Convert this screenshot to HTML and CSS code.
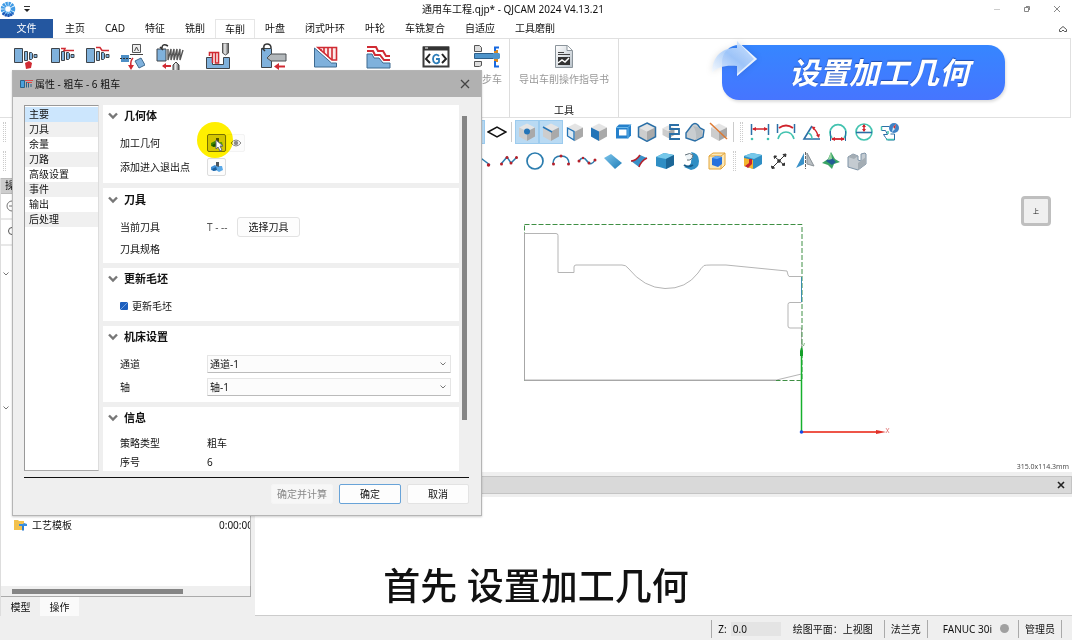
FILE: index.html
```html
<!DOCTYPE html>
<html lang="zh-CN">
<head>
<meta charset="utf-8">
<meta name="viewport" content="width=device-width, initial-scale=1">
<title>通用车工程.qjp* - QJCAM 2024 V4.13.21</title>
<link rel="stylesheet" href="styles.css">
</head>
<body>
<svg class="defs" width="0" height="0" aria-hidden="true">
  <defs>
    <linearGradient id="bar" x1="0" y1="0" x2="1" y2="0"><stop offset="0" stop-color="#777"/><stop offset=".4" stop-color="#eee"/><stop offset="1" stop-color="#555"/></linearGradient>
    <linearGradient id="sheen" x1="0" y1="0" x2="1" y2="1"><stop offset="0" stop-color="#7cc4ea"/><stop offset="1" stop-color="#1f7db8"/></linearGradient>
    <linearGradient id="page" x1="0" y1="0" x2="1" y2="1"><stop offset="0" stop-color="#fff"/><stop offset="1" stop-color="#b9c2ca"/></linearGradient>
    <linearGradient id="arrow" x1="0" y1="1" x2="1" y2="0"><stop offset="0" stop-color="#fff"/><stop offset=".5" stop-color="#a9cdfb"/><stop offset="1" stop-color="#e4f0ff"/></linearGradient>
    <symbol id="cube" viewBox="0 0 20 20">
      <path d="M10 1.500 18 5.500 10 9.500 2 5.500z" fill="#e4e4e4"/>
      <path d="M2 5.500 10 9.500V19L2 14.500z" fill="#cdcdcd"/>
      <path d="M18 5.500 10 9.500V19l8-4.500z" fill="#a9a9a9"/>
    </symbol>
    <symbol id="chevron" viewBox="0 0 10 8"><path d="M1 1.500 5 5.500 9 1.500" fill="none" stroke="#777" stroke-width="2.400"/></symbol>
    <symbol id="thin-chevron" viewBox="0 0 8 6"><path d="M1.500 1.500 4 4l2.500-2.500" fill="none" stroke="#777" stroke-width="1"/></symbol>
    <symbol id="geometry" viewBox="0 0 14 12"><path d="M1 6l4-2 4 3-4 3-4-1z" fill="#3f8fd6"/><path d="M7 5l5 0 1 4-4 2-3-2z" fill="#5aa9e8"/><path d="M6 5V1h3v5z" fill="#4d565e"/><path d="M2 8l4-2 1 3-4 1z" fill="#1b5d9c"/></symbol>
    <symbol id="stepped" viewBox="0 0 26 26">
      <path d="M1.500 3.500h8v14h-8z" fill="#7fb1dc" stroke="#3e444a"/>
      <path d="M11.500 6.500h3v9h-3z M16.500 7.500h2l1 1v5l-1 1h-2z M21 9.500h3v3h-3z" fill="#7fb1dc" stroke="#3e444a"/>
    </symbol>
  </defs>
</svg>

<div class="app">
  <header class="titlebar">
    <div class="quick">
      <svg width="16" height="16" viewBox="0 0 16 16" fill="none"><circle cx="8" cy="8" r="5" stroke="#3f9be6" stroke-width="4.500" stroke-dasharray="2 .6"/><path d="M3 12A6.300 6.300 0 0 0 13 12" stroke="#1d55b5" stroke-width="3" stroke-dasharray="2 .6"/><circle cx="8" cy="8" r="2" fill="#fff"/></svg>
      <svg width="8" height="8" viewBox="0 0 8 8"><path d="M1 1.500h6" stroke="#333"/><path d="M1 4h6L4 7z" fill="#222"/></svg>
    </div>
    <h1 class="title">通用车工程.qjp* - QJCAM 2024 V4.13.21</h1>
    <div class="controls">
      <button type="button" class="plain"><svg width="8" height="8"><path d="M1 4.500h6" stroke="#ccc"/></svg></button>
      <button type="button" class="plain"><svg width="8" height="8" fill="none" stroke="#888"><path d="M1.500 2.500h4v4h-4z M3 1.500h3.500V5"/></svg></button>
      <button type="button" class="plain"><svg width="8" height="8" fill="none" stroke="#888"><path d="M1 1l6 6M7 1 1 7"/></svg></button>
    </div>
  </header>

  <nav class="tabs">
    <button type="button" class="tab file">文件</button>
    <button type="button" class="tab">主页</button>
    <button type="button" class="tab">CAD</button>
    <button type="button" class="tab">特征</button>
    <button type="button" class="tab">铣削</button>
    <button type="button" class="tab active">车削</button>
    <button type="button" class="tab">叶盘</button>
    <button type="button" class="tab">闭式叶环</button>
    <button type="button" class="tab">叶轮</button>
    <button type="button" class="tab">车铣复合</button>
    <button type="button" class="tab">自适应</button>
    <button type="button" class="tab">工具磨削</button>
    <button type="button" class="plain collapse"><svg width="10" height="8" fill="none" stroke="#555"><path d="M1.500 6.500V4.500L5 1.500l3.500 3v2h-2L5 5 3.500 6.500z"/></svg></button>
  </nav>

  <section class="ribbon">
    <div class="group turning">
      <button type="button" class="tool low"><svg width="26" height="26"><use href="#stepped" width="26" height="26"/><path d="M12 18l4-2 3 2-1 5-5 1z" fill="#d02b33"/></svg></button>
      <button type="button" class="tool low"><svg width="26" height="26"><use href="#stepped" width="26" height="26"/><path d="M11 3.500h4l-1 2h10" fill="none" stroke="#d02b33" stroke-width="1.500"/></svg></button>
      <button type="button" class="tool low"><svg width="26" height="26"><use href="#stepped" width="26" height="26"/><path d="M11 2.500h4l2 3h7" fill="none" stroke="#d02b33" stroke-width="1.500"/></svg></button>
      <button type="button" class="tool"><svg width="26" height="28"><path d="M13.500 1.500h8v8h-8z" fill="#eee" stroke="#555"/><path d="M15.500 8l2-4 2 4M11 11.500h13" fill="none" stroke="#444"/><path d="M2 12h8v7H2z" fill="#4d8fc6"/><path d="M1 15.500h11" stroke="#333" stroke-dasharray="2 1"/><path d="M16 18l6-3 4 7-6 3z" fill="#7fb1dc" stroke="#3e6a90"/><path d="M14 15q-3 3-2 8" fill="none" stroke="#d02b33" stroke-width="1.500"/><path d="M9 22h6l-3 5z" fill="#d02b33"/></svg></button>
      <button type="button" class="tool"><svg width="30" height="28"><path d="M2 6h9v12H2z" fill="#7fb1dc" stroke="#3e444a"/><path d="M7 5q0-4 4-3l2 1M5 4l3 3" fill="none" stroke="#333" stroke-width="1.500"/><path d="M13 6v11l3-11v11l3-11v11l3-11v11l3-11v11l3-10" fill="none" stroke="#555" stroke-width="1.400"/><path d="M8 23h8" stroke="#d02b33" stroke-width="2"/><path d="M11 20v6l-4-3z" fill="#d02b33"/><path d="M18 28v-6l3-3 3 3v6" fill="url(#bar)" stroke="#444"/></svg></button>
      <button type="button" class="tool"><svg width="26" height="27"><path d="M1.500 14.500h6v7h11v-7h6v11h-23z" fill="#7fb1dc" stroke="#3e444a"/><path d="M4.500 13V9.500h9V20h-3V9.500M7.500 10v10" fill="none" stroke="#d02b33" stroke-width="1.600"/><path d="M17.500 0h6v10l-3 2-3-2z" fill="url(#bar)" stroke="#555"/></svg></button>
      <button type="button" class="tool"><svg width="28" height="27"><path d="M2.500 5.500h10v6l-3 3 3 3v7h-10z" fill="#7fb1dc" stroke="#3e444a"/><path d="M5 6q-1-5 3-5 4 0 4 4M3 5l3 3" fill="none" stroke="#333" stroke-width="1.500"/><path d="M8 15l4-4h15v7H12z" fill="#b3b8bb" stroke="#4b4f52"/><path d="M18 23.500h8" stroke="#d02b33" stroke-width="2"/><path d="M20 20v7l-5-3.500z" fill="#d02b33"/></svg></button>
      <button type="button" class="tool low"><svg width="26" height="26"><path d="M1.500 3v19h22v-4h-5z" fill="#7fb1dc" stroke="#3e6a90"/><path d="M5 2.500h18.500V15H19z" fill="#fbeaea" stroke="#d02b33" stroke-width="1.600"/><path d="M11 3v5M15 3v9M19 3v12M7 5h2" stroke="#d02b33" stroke-width="1.600"/></svg></button>
      <button type="button" class="tool low"><svg width="26" height="26"><path d="M1 9h5l2 4h5l4 5h7v5H1z" fill="#7fb1dc" stroke="#3e6a90"/><path d="M1 6h6l2 4h5l4 5h6M1 2h9l2 4h5l3 5h4" fill="none" stroke="#d02b33" stroke-width="2"/></svg></button>
      <button type="button" class="tool low"><svg width="28" height="26"><path d="M1.500 2.500h25v19h-25z" fill="#fff" stroke="#3c3c3c" stroke-width="2"/><path d="M1 1.500h26v4H1z" fill="#333"/><path d="M3 3h3" stroke="#fff"/><path d="M8 9l-4 5 4 4M20 9l4 5-4 4" fill="none" stroke="#222" stroke-width="2"/><path d="M17 11q-2-2-4-1t-2 4 2 4 4-1v-3h-3" fill="none" stroke="#2b7cb8" stroke-width="1.800"/></svg></button>
      <button type="button" class="tool"><svg width="28" height="26"><path d="M1.500 10.500h19v5h-19z" fill="#4f95cb" stroke="#2d5f8a"/><path d="M20 10h6l1 1v4l-1 1h-6z" fill="#4f95cb"/><path d="M1.500 2.500h5l2 2v4h-7zM1.500 18.500h7v4l-2 1h-5z" fill="#ddd" stroke="#555"/><path d="M21 8.500h4M21 17.500h4" stroke="#d88a24" stroke-width="3"/><path d="M26 4.500h-4V8M26 23.500h-4V18" fill="none" stroke="#1769e0" stroke-width="2"/></svg><span>同步车</span></button>
    </div>
    <div class="group tools">
      <button type="button" class="tool"><svg width="22" height="26"><path d="M2.500 2.500h12l5 5v17h-17z" fill="url(#page)" stroke="#8b949b"/><path d="M14 2.500v5h5" fill="#fff" stroke="#8b949b"/><path d="M5 9.500h6M5 11.500h12" stroke="#444"/><path d="M5 14h12v8H5z" fill="#333"/><path d="M5 20l4-3 3 2 4-4" fill="none" stroke="#fff" stroke-width="1.500"/></svg><span>导出车削操作指导书</span></button>
      <span class="group-name">工具</span>
    </div>
  </section>

  <div class="toolbars">
    <div class="bar">
      <i class="grip edge"></i>
      <button type="button" class="ico on"></button>
      <button type="button" class="ico"><svg width="20" height="20"><path d="M1 10l9-5 9 5-9 5z" fill="none" stroke="#111" stroke-width="1.500"/></svg></button>
      <i class="sep"></i>
      <button type="button" class="ico on"><svg width="20" height="20"><use href="#cube"/><circle cx="10" cy="9.500" r="3" fill="#2475b8"/></svg></button>
      <button type="button" class="ico on"><svg width="20" height="20"><use href="#cube"/><path d="M2 5l9 5" stroke="#2475b8" stroke-width="1.500"/></svg></button>
      <button type="button" class="ico"><svg width="20" height="20"><use href="#cube"/><path d="M2.500 6 9 9.500V18l-6.500-4z" fill="#dceaf4" stroke="#2475b8" stroke-width="1.300"/></svg></button>
      <button type="button" class="ico"><svg width="20" height="20"><use href="#cube"/><path d="M2 5.500 10 9.500V19l-8-4.500z" fill="#2475b8"/></svg></button>
      <button type="button" class="ico"><svg width="20" height="20"><path d="M3 5.500 6 2.500h12v11l-3 3H3z" fill="#2580cb"/><path d="M6 7.500h7.500v6H6z" fill="#fff"/><path d="M3 5.500h12v11M15 5.500l3-3" fill="none" stroke="#69b7ea"/></svg></button>
      <button type="button" class="ico"><svg width="20" height="20"><use href="#cube"/><path d="M10 1l8.500 4.300v9.400L10 19.300l-8.500-4.600V5.300z" fill="none" stroke="#2b6fa6" stroke-width="1.500"/></svg></button>
      <button type="button" class="ico"><svg width="20" height="20"><use href="#cube" x="0" y="1" width="15" height="17"/><path d="M18 3H9v4h9v5H9v5h10" fill="none" stroke="#2b6fa6" stroke-width="1.800"/></svg></button>
      <button type="button" class="ico"><svg width="22" height="20"><path d="M2 11 8 3q3-3 6 0l2 3 4 2-1 7-8 4-9-3z" fill="#c9cdd0" stroke="#2b6fa6" stroke-width="1.400"/><path d="M9 4q4 5 3 14l6-4V9l-4-4z" fill="#b6bcc0"/></svg></button>
      <button type="button" class="ico"><svg width="20" height="20"><use href="#cube"/><path d="M1 1l17 16" stroke="#dd7a34" stroke-width="1.500"/></svg></button>
      <i class="sep"></i><i class="grip"></i>
      <button type="button" class="ico wide"><svg width="20" height="20"><path d="M1.500 2v11M18.500 2v11" stroke="#2b6fa6" stroke-width="1.500"/><path d="M3 7h14" stroke="#d0232c" stroke-width="1.500"/><path d="M2 7l4-2v4zM18 7l-4-2v4z" fill="#d0232c"/><circle cx="2" cy="17" r="1.300" fill="#43c3b0"/><circle cx="18" cy="17" r="1.300" fill="#43c3b0"/></svg></button>
      <button type="button" class="ico wide"><svg width="20" height="20" fill="none"><path d="M1.500 2v9M18.500 2v9" stroke="#2b6fa6" stroke-width="1.500"/><path d="M3 6q7-5 14 0" stroke="#d0232c" stroke-width="1.800"/><path d="M2 17q2-7 8-7t8 7" stroke="#43c3b0" stroke-width="1.600"/></svg></button>
      <button type="button" class="ico wide"><svg width="20" height="20" fill="none"><path d="M10 4 2 17h16" stroke="#2b6fa6" stroke-width="1.600"/><path d="M6 11q4 1 4 6" stroke="#43c3b0" stroke-width="1.500"/><path d="M11 6q4 3 5 8" stroke="#d0232c" stroke-width="1.500"/><path d="M9.500 4.500l4 .5-2 3zM17 16l-3-3 4-1z" fill="#d0232c"/></svg></button>
      <button type="button" class="ico wide"><svg width="20" height="20" fill="none"><path d="M4 16a8 8 0 1 1 12 0" stroke="#43c3b0" stroke-width="1.800"/><path d="M2.500 9v10M17.500 9v10" stroke="#2b6fa6"/><path d="M4 17h12" stroke="#d0232c" stroke-width="1.800"/><path d="M3 17l4-2v4zM17 17l-4-2v4z" fill="#d0232c"/></svg></button>
      <button type="button" class="ico wide"><svg width="20" height="20" fill="none"><circle cx="10" cy="10" r="8" stroke="#43c3b0" stroke-width="1.600"/><path d="M2 10.500h16" stroke="#2b6fa6" stroke-width="1.600"/><path d="M10 3v6" stroke="#d0232c" stroke-width="1.500"/><path d="M10 2l2 3H8zM10 10l2-3H8z" fill="#d0232c"/></svg></button>
      <button type="button" class="ico wide"><svg width="20" height="20" fill="none"><path d="M1.500 4.500h8M1.500 8.500h4l2 4h-4l2 3 2 2.500h7v-6h-4" stroke="#2b6fa6"/><path d="M1.500 4.500v4M6 17.500h8M8 12v-3" stroke="#43c3b0" stroke-width="1.500"/><circle cx="14" cy="6" r="5" fill="#3f83c6"/><path d="M16 2l-1 5-3 3 1-5z" fill="#d8ecfa"/><path d="M16 2l-1 5-2-2z" fill="#c83237"/></svg></button>
    </div>
    <div class="bar second">
      <i class="grip edge"></i>
      <button type="button" class="ico wide"><svg width="20" height="20"><path d="M5 5l12 9" stroke="#2b7cae" stroke-width="1.500"/><circle cx="15.500" cy="14" r="1.700" fill="#b5202b"/></svg></button>
      <button type="button" class="ico wide"><svg width="20" height="20"><path d="M2 13l6-7 4 6 6-6" fill="none" stroke="#2b7cae" stroke-width="1.500"/><g fill="#b5202b"><circle cx="2.500" cy="13" r="1.500"/><circle cx="8" cy="6.500" r="1.500"/><circle cx="12" cy="12" r="1.500"/><circle cx="17.500" cy="6.500" r="1.500"/></g></svg></button>
      <button type="button" class="ico wide"><svg width="20" height="20"><circle cx="10" cy="10" r="8" fill="none" stroke="#2b7cae" stroke-width="1.700"/></svg></button>
      <button type="button" class="ico wide"><svg width="20" height="20"><path d="M2 13q0-8 8-8t8 8" fill="none" stroke="#2b7cae" stroke-width="1.500"/><g fill="#b5202b"><circle cx="2.500" cy="13" r="1.500"/><circle cx="10" cy="5" r="1.500"/><circle cx="17.500" cy="13" r="1.500"/></g></svg></button>
      <button type="button" class="ico wide"><svg width="20" height="20"><path d="M2 10q4-6 8 0t8-1" fill="none" stroke="#2b7cae" stroke-width="1.500"/><g fill="#b5202b"><circle cx="2" cy="10" r="1.500"/><circle cx="6" cy="7" r="1.200"/><circle cx="12" cy="12" r="1.500"/><circle cx="18" cy="9" r="1.500"/></g></svg></button>
      <button type="button" class="ico wide"><svg width="20" height="20"><path d="M1 7l7-4 11 9-7 6z" fill="url(#sheen)"/></svg></button>
      <button type="button" class="ico wide"><svg width="20" height="20"><path d="M2 10q5 0 9-6l7 3q-6 3-8 9z" fill="#3a91c8"/><path d="M2 10q5 0 9-6M10 16q2-6 8-9" fill="none" stroke="#b5202b" stroke-width="1.500"/></svg></button>
      <button type="button" class="ico wide"><svg width="20" height="20"><path d="M1 6l8-4 10 2v10l-8 4-10-3z" fill="#2f8ec4"/><path d="M1 6l8-4 10 2-8 4z" fill="#76c8ea"/><path d="M11 8l8-4v10l-8 4z" fill="#1d6797"/></svg></button>
      <button type="button" class="ico wide"><svg width="20" height="20"><path d="M10 1q8 1 8 9t-8 9L3 16q5 0 7-4 0-5 2-6z" fill="#2f8ec4"/><path d="M4 4q5-3 8 0-1 6-6 5" fill="#eef4f7" stroke="#65737b"/><path d="M3 14q4 3 9 0" fill="none" stroke="#185c88" stroke-width="2"/></svg></button>
      <button type="button" class="ico wide"><svg width="20" height="20"><path d="M2 5l4-3h12v12l-4 4H2zM2 5h12v13M14 5l4-3" fill="#fbe8b8" stroke="#e3a53b"/><path d="M5 7l4-2 6 1v7l-4 3-6-2z" fill="#2772dd"/><path d="M5 7l4-2 6 1-5 2z" fill="#67acf5"/></svg></button>
      <i class="grip"></i>
      <button type="button" class="ico wide"><svg width="20" height="20"><path d="M1 5l8-3 10 2v9l-8 5-10-3z" fill="#2f8ec4"/><path d="M1 5l8-3 10 2-8 4z" fill="#76c8ea"/><path d="M1 7l9 2v9l-9-3z" fill="#f3b52e"/><path d="M2 15l4-3V8h3v5l-4 4z" fill="#c8232d"/></svg></button>
      <button type="button" class="ico wide"><svg width="20" height="20" fill="none" stroke="#333"><path d="M3 17 16 4M6 6l9 8"/><path d="M14 3.500l3-.5-.5 3zM2.500 15l.5 2.500 2.500-.5zM5 5l2.500 0-2 2.500zM15.500 12v2.500l-2.500-.5z" fill="#333"/><circle cx="10" cy="10" r="1.300" fill="#333"/></svg></button>
      <button type="button" class="ico wide"><svg width="20" height="20"><path d="M1 17 9 2v11z" fill="#3a91c8"/><path d="M12 2l7 13-7-2z" fill="#b8bec2" stroke="#8b9398"/><path d="M10.500 1v17" stroke="#666" stroke-dasharray="3 1"/></svg></button>
      <button type="button" class="ico wide"><svg width="20" height="20"><path d="M10 1l4 7 5 3-6 2-2 5-4-4-6-2 6-4z" fill="#3aa565"/><path d="M5 10l5-4 5 5-4 3z" fill="#245d96"/><path d="M10 1l1 7-4 1z" fill="#9bd6a2"/></svg></button>
      <button type="button" class="ico wide"><svg width="20" height="20"><path d="M1 6l5-3 5 2v4l3 1V3l4-1 1 1v10l-8 6-10-3z" fill="#c4cbd1" stroke="#7f94a7"/><path d="M1 6l5-3 5 2-4 3zM11 12l8-6v7l-8 6z" fill="#a4adb4"/></svg></button>
    </div>
  </div>

  <main class="workspace">
    <aside class="side">
      <div class="side-head">操作</div>
      <div class="side-tools"><svg width="12" height="12" fill="none" stroke="#777"><circle cx="6" cy="6" r="5"/><path d="M3 6h6"/></svg></div>
      <div class="side-search"><svg width="12" height="12" fill="none" stroke="#555"><circle cx="6" cy="5" r="3.500"/><path d="M8 8l3 3"/></svg></div>
      <div class="tree">
        <svg class="fold" width="8" height="6"><use href="#thin-chevron"/></svg>
        <svg class="fold second-fold" width="8" height="6"><use href="#thin-chevron"/></svg>
        <div class="node">
          <svg width="13" height="12"><path d="M0 1h4l1 1h5v9H0z" fill="#f2c14d"/><path d="M5 5h4l1-1 3 1v2H5z" fill="#3a8ede"/><path d="M9 7v4.500" stroke="#2f7fd0" stroke-width="2"/></svg>
          <span>工艺模板</span><span class="time">0:00:00</span>
        </div>
      </div>
      <div class="hscroll"><i></i></div>
      <div class="side-tabs"><button type="button">模型</button><button type="button" class="active">操作</button></div>
    </aside>

    <section class="content">
      <div class="canvas">
        <svg class="drawing" width="100%" height="100%" fill="none">
          <g transform="translate(-255 -178)">
            <path d="M524.500 380V233.500H556q2 0 2 2V272.500H574V267q0-2 2-2H622q4 0 6 3Q644 288 665 288.500 686 289 698 273q3-5 6-7.500 2-.5 7-.5H726L787 271q1 5 2 5.500h12.500" stroke="#b5b5b5"/>
            <path d="M801.500 302.500H790q-2 0-2 2V326q0 2 2 2h11.500V374l-25 6H524.500" stroke="#b5b5b5"/>
            <path d="M524.500 224.500h277.500v156H524.500z" stroke="#3f8f44" stroke-dasharray="5 2"/>
            <path d="M524.500 233v147.500H776" stroke="#a7a7a7"/>
            <path d="M801.500 277v25" stroke="#3a8eae"/>
            <path d="M801.500 431v-83" stroke="#16b02c" stroke-width="1.500"/>
            <path d="M800 356v-5l1.500-4 1.500 4v5z" fill="#16a02a"/>
            <path d="M801 432h80" stroke="#ee5548" stroke-width="2"/>
            <path d="M876 430l10 2-10 2z" fill="#e03028"/>
            <path d="M886 428l3 5m0-5-3 5" stroke="#d66" stroke-width=".7"/>
            <path d="M802 344l1.500 2 1-3" stroke="#5a9c5a" stroke-width=".7"/>
            <circle cx="801.500" cy="432" r="1.800" fill="#174be8"/>
          </g>
        </svg>
        <button type="button" class="viewcube">上</button>
        <span class="extent">315.0x114.3mm</span>
      </div>
      <div class="output-head"><button type="button" class="plain"><svg width="8" height="8"><path d="M1 1l6 6M7 1 1 7" stroke="#222" stroke-width="1.600"/></svg></button></div>
      <div class="output"></div>
    </section>
  </main>

  <footer class="status">
    <label class="cell z">Z: <input type="text" value="0.0"></label>
    <span class="cell plane">绘图平面：上视图</span>
    <span class="cell">法兰克</span>
    <span class="cell machine">FANUC 30i <i class="dot"></i></span>
    <span class="cell last">管理员</span>
  </footer>
</div>

<div class="dialog" role="dialog" aria-labelledby="dialog-title">
  <header class="dialog-head">
    <svg width="13" height="10"><path d="M.500 1.500h4v7h-4zM6.500 3v5.500M8.500 4v4.500M11 5v3" fill="#4aa0dd" stroke="#2f6285"/><path d="M5 1.500h8M7 3.500h5" stroke="#e04a4a"/></svg>
    <h2 id="dialog-title">属性 - 粗车 - 6 粗车</h2>
    <button type="button" class="plain"><svg width="10" height="10"><path d="M1 1l8 8M9 1 1 9" stroke="#444" stroke-width="1.300"/></svg></button>
  </header>
  <div class="dialog-body">
    <ul class="pages">
      <li class="selected">主要</li><li>刀具</li><li>余量</li><li>刀路</li><li>高级设置</li><li>事件</li><li>输出</li><li>后处理</li>
    </ul>
    <div class="sections">
      <section class="panel">
        <h3><svg width="10" height="8"><use href="#chevron"/></svg>几何体</h3>
        <div class="row"><span class="name">加工几何</span>
          <span class="pick"><button type="button" class="square pressed"><svg width="14" height="12"><use href="#geometry"/></svg></button><i class="halo"></i><svg class="pointer" width="9" height="13"><path d="M1 1v9l2-2 2 4 2-1-2-4h3z" fill="#fff" stroke="#667"/></svg></span>
          <button type="button" class="square eye"><svg width="12" height="10" fill="none" stroke="#888"><path d="M1 5q5-6 10 0-5 6-10 0z"/><circle cx="6" cy="5" r="1.800" fill="#888"/></svg></button>
        </div>
        <div class="row"><span class="name">添加进入退出点</span><button type="button" class="square"><svg width="14" height="12"><use href="#geometry"/></svg></button></div>
      </section>
      <section class="panel cutter">
        <h3><svg width="10" height="8"><use href="#chevron"/></svg>刀具</h3>
        <div class="row"><span class="name">当前刀具</span><span class="tool-no">T - --</span><button type="button" class="choose">选择刀具</button></div>
        <div class="row short"><span class="name">刀具规格</span></div>
      </section>
      <section class="panel tight">
        <h3><svg width="10" height="8"><use href="#chevron"/></svg>更新毛坯</h3>
        <div class="row"><label class="check"><input type="checkbox" checked>更新毛坯</label></div>
      </section>
      <section class="panel tight">
        <h3><svg width="10" height="8"><use href="#chevron"/></svg>机床设置</h3>
        <div class="row"><label class="name" for="channel">通道</label><span class="drop"><select id="channel"><option>通道-1</option></select><svg width="8" height="6"><use href="#thin-chevron"/></svg></span></div>
        <div class="row"><label class="name" for="axis">轴</label><span class="drop"><select id="axis"><option>轴-1</option></select><svg width="8" height="6"><use href="#thin-chevron"/></svg></span></div>
      </section>
      <section class="panel info">
        <h3><svg width="10" height="8"><use href="#chevron"/></svg>信息</h3>
        <div class="row"><span class="name">策略类型</span><span>粗车</span></div>
        <div class="row"><span class="name">序号</span><span>6</span></div>
      </section>
    </div>
    <div class="vscroll"><i></i></div>
  </div>
  <footer class="dialog-foot">
    <button type="button" disabled>确定并计算</button>
    <button type="button" class="primary">确定</button>
    <button type="button">取消</button>
  </footer>
</div>

<div class="banner">
  <svg width="50" height="42"><path d="M2 33C2 17 12 7 27 8V1L47 19 27 36V26C15 25 7 27 2 33z" fill="url(#arrow)" opacity=".9"/><path d="M27 1l20 18-20 17v-2l17-15z" fill="#fff" opacity=".7"/></svg>
  <strong>设置加工几何</strong>
</div>
<p class="caption">首先 设置加工几何</p>
</body>
</html>
```
FILE: styles.css
```css
* { box-sizing: border-box; }

html, body { height: 100%; margin: 0; }

body {
  position: relative;
  overflow: hidden;
  font: 10px/14px "Noto Sans", "Noto Sans CJK SC", sans-serif;
  color: #111;
  background: #fff;
}

button, input, select { font: inherit; color: inherit; margin: 0; padding: 0; }
button { border: 0; background: none; }
h1, h2, h3, p, ul { margin: 0; padding: 0; font: inherit; list-style: none; }
svg { display: block; flex: none; }
.defs { position: absolute; }

.app { display: flex; flex-direction: column; height: 100%; }

.plain { display: flex; align-items: center; justify-content: center; }

/* Title bar and tabs */
.titlebar { display: flex; align-items: center; height: 19px; flex: none; padding-bottom: 1px; }
.quick { display: flex; align-items: center; gap: 7px; width: 44px; }
.title { flex: 1; text-align: center; white-space: nowrap; }
.controls { display: flex; width: 90px; }
.controls .plain { width: 30px; }

.tabs { display: flex; height: 19px; flex: none; }
.tab { padding: 0 10px 1px; white-space: nowrap; }
.tab.file { width: 53px; margin-right: 2px; background: #2457a0; color: #fff; }
.tab.active { border: 1px solid #e6e6e6; border-bottom: 0; padding: 0 9px 1px; }
.collapse { margin-left: auto; width: 18px; }

/* Ribbon */
.ribbon {
  display: flex;
  height: 80px;
  flex: none;
  margin-right: 1px;
  border: 1px solid #e0e0e0;
  border-left: 0;
}
.group { border-right: 1px solid #ddd; padding-top: 4px; }
.turning {
  display: grid;
  grid-template-columns: 38px 36px 34px 33px 44px 52px 57px 50px 56px 58px 44px;
  padding-left: 7px;
}
.tools { display: flex; flex-direction: column; align-items: center; justify-content: space-between; width: 109px; }
.tool { display: flex; flex-direction: column; align-items: center; gap: 1px; color: #999; white-space: nowrap; }
.tool.low { padding-top: 2px; }
.tool svg { height: 28px; }

/* Drawing toolbars */
.toolbars { display: flex; flex-direction: column; gap: 4px; height: 60px; flex: none; padding-top: 1px; }
.bar { display: flex; align-items: center; height: 25px; flex: none; }
.ico { display: flex; align-items: center; justify-content: center; width: 24px; height: 24px; flex: none; }
.ico.wide { width: 26px; }
.ico.on { background: #b9daf3; border: 1px solid #9ccbee; }
.sep { width: 1px; height: 20px; margin: 0 3px 0 2px; background: #ccc; }
.grip { width: 3px; height: 20px; margin: 0 4px 0 3px; border: dotted #ccc; border-width: 0 1px; }
.grip.edge { margin-right: 455px; }
.second .grip.edge { margin-right: 464px; }

/* Workspace */
.workspace { display: grid; grid-template-columns: 251px 1fr; gap: 4px; flex: 1; min-height: 0; background: #efefef; }
.side { display: flex; flex-direction: column; min-width: 0; border-left: 1px solid #ddd; }
.side-head { height: 16px; padding-left: 4px; line-height: 13px; background: #cdcdcd; border: 1px solid #bbb; border-left: 0; }
.side-tools, .side-search { display: flex; align-items: center; height: 26px; padding-left: 5px; background: #fff; border-bottom: 2px solid #e8e8e8; }
.tree { position: relative; flex: 1; background: #fff; border-right: 1px solid #bbb; overflow: hidden; padding-top: 272px; }
.fold { position: absolute; left: 1px; top: 25px; }
.fold.second-fold { top: 159px; }
.node { display: flex; align-items: center; gap: 5px; padding-left: 13px; white-space: nowrap; }
.time { margin-left: auto; width: 31px; }
.hscroll { height: 11px; padding: 3px 0 3px 11px; border: solid #aaa; border-width: 0 1px 1px 0; }
.hscroll i { display: block; width: 72%; height: 5px; background: #858585; }
.side-tabs { display: flex; height: 19px; }
.side-tabs button { width: 39px; }
.side-tabs .active { background: #fafafa; }

.content { display: flex; flex-direction: column; min-width: 0; }
.canvas { position: relative; flex: 1; min-height: 0; background: #fff; }
.drawing { position: absolute; inset: 0; }
.viewcube {
  position: absolute;
  right: 21px;
  top: 18px;
  width: 30px;
  height: 30px;
  border: 3px solid #bfbfbf;
  border-radius: 4px;
  background: #efefef;
  font-size: 6px;
  line-height: 10px;
}
.extent { position: absolute; right: 3px; bottom: 0; font: 7px/10px "Open Sans", sans-serif; color: #444; }
.output-head { display: flex; justify-content: flex-end; height: 18px; flex: none; margin-top: 4px; padding-right: 6px; background: #d9d9d9; border: 1px solid #c4c4c4; }
.output { height: 119px; flex: none; margin-top: 3px; background: #fff; border-bottom: 1px solid #ccc; }

/* Status bar */
.status { display: flex; justify-content: flex-end; align-items: center; height: 24px; flex: none; padding: 1px 10px 0 0; background: #efefef; white-space: nowrap; }
.cell { display: flex; align-items: center; height: 18px; padding: 0 6px; border-right: 1px solid #aaa; }
.z { gap: 4px; border-right: 0; border-left: 1px solid #aaa; }
.z input { width: 50px; height: 14px; border: 0; padding-left: 2px; background: #e4e4e4; }
.plane { padding-right: 11px; }
.machine { gap: 8px; padding: 0 9px 0 15px; }
.dot { width: 9px; height: 9px; border-radius: 50%; background: #a0a0a0; }

/* Properties dialog */
.dialog {
  position: absolute;
  left: 12px;
  top: 70px;
  width: 470px;
  background: #efefef;
  border: 1px solid #b5b5b5;
  box-shadow: 0 1px 2px #0003;
}
.dialog-head { display: flex; align-items: center; gap: 2px; height: 26px; padding: 0 9px 1px 7px; background: #b1b1b1; }
.dialog-head .plain { margin-left: auto; width: 14px; height: 20px; }
.dialog-body { display: flex; height: 381px; margin: 0 12px 0 11px; padding: 8px 0 6px; border-bottom: 1px solid #111; }
.pages { width: 75px; flex: none; margin-right: 4px; padding-top: 1px; background: #fff; border: 1px solid #999; border-right-color: #ddd; border-bottom-color: #aaa; }
.pages li { height: 15px; padding-left: 4px; }
.pages li:nth-child(even) { background: #f0f0f0; }
.pages .selected { background: #cce6fd; }
.sections { display: flex; flex-direction: column; gap: 5px; flex: 1; overflow: hidden; }
.panel { flex: none; padding: 0 8px 4px 9px; background: #fff; }
.panel.cutter { padding-top: 1px; }
.panel.info { padding-bottom: 0; }
.panel h3 { display: flex; align-items: center; gap: 6px; height: 26px; padding: 0 0 4px; margin-left: -4px; font-size: 11px; font-weight: 700; }
.row { display: flex; align-items: center; height: 24px; padding-left: 8px; }
.row.short { height: 20px; }
.tight .row { height: 23px; }
.info .row { height: 19px; }
.name { width: 87px; flex: none; }
.square { display: flex; align-items: center; justify-content: center; width: 19px; height: 18px; border: 1px solid #ddd; border-radius: 2px; background: #fcfcfc; }
.square.pressed { border-color: #777; background: #d4d4c6; }
.square.eye { border-color: #f3f3f3; }
.pick { position: relative; }
.halo { position: absolute; left: -10px; top: -12px; width: 36px; height: 36px; border-radius: 50%; background: #ffef00; mix-blend-mode: multiply; }
.pointer { position: absolute; left: 8px; top: 5px; }
.tool-no { width: 30px; color: #555; white-space: nowrap; }
.choose { width: 63px; height: 20px; border: 1px solid #e2e2e2; border-radius: 3px; background: #fdfdfd; }
.check { display: flex; align-items: center; gap: 4px; }
.check input {
  appearance: none;
  width: 8px;
  height: 8px;
  border-radius: 1px;
  background: linear-gradient(135deg, #1e5fbe 45%, #6fa0e0 50%, #1e5fbe 55%);
}
.drop { position: relative; flex: 1; }
.drop select { appearance: none; display: block; width: 100%; height: 18px; padding-left: 2px; border: 1px solid #e5e5e5; border-bottom-color: #bbb; border-radius: 1px; background: #fcfcfc; }
.drop svg { position: absolute; right: 4px; top: 6px; }
.vscroll { width: 10px; flex: none; padding: 11px 2px 0 3px; }
.vscroll i { display: block; height: 304px; background: #858585; }
.dialog-foot { display: flex; justify-content: flex-end; gap: 6px; padding: 6px 12px 11px; }
.dialog-foot button { width: 62px; height: 20px; border: 1px solid #e3e3e3; border-radius: 2px; background: #fdfdfd; }
.dialog-foot button:disabled { color: #888; border-color: #f5f5f5; background: #f7f7f7; }
.dialog-foot .primary { border-color: #68a3d8; }

/* Overlays */
.banner {
  position: absolute;
  right: 67px;
  top: 45px;
  display: flex;
  align-items: center;
  justify-content: flex-end;
  width: 283px;
  height: 55px;
  padding-right: 36px;
  border-radius: 17px;
  background: linear-gradient(#3686ff, #4675ff);
  box-shadow: 1px 2px 3px #0002;
}
.banner svg { position: absolute; left: -12px; top: -5px; filter: drop-shadow(0 0 3px #0002); }
.banner strong { font-size: 30px; line-height: 40px; font-style: italic; color: #fff; text-shadow: 0 -1px 1px #1d4cae; white-space: nowrap; }
.caption {
  position: absolute;
  left: 0;
  right: 0;
  bottom: 26px;
  text-align: center;
  font-size: 37px;
  line-height: 56px;
  font-weight: 500;
  color: #111;
  text-shadow: 0 0 3px #fff, 0 0 3px #fff;
  pointer-events: none;
}
```
